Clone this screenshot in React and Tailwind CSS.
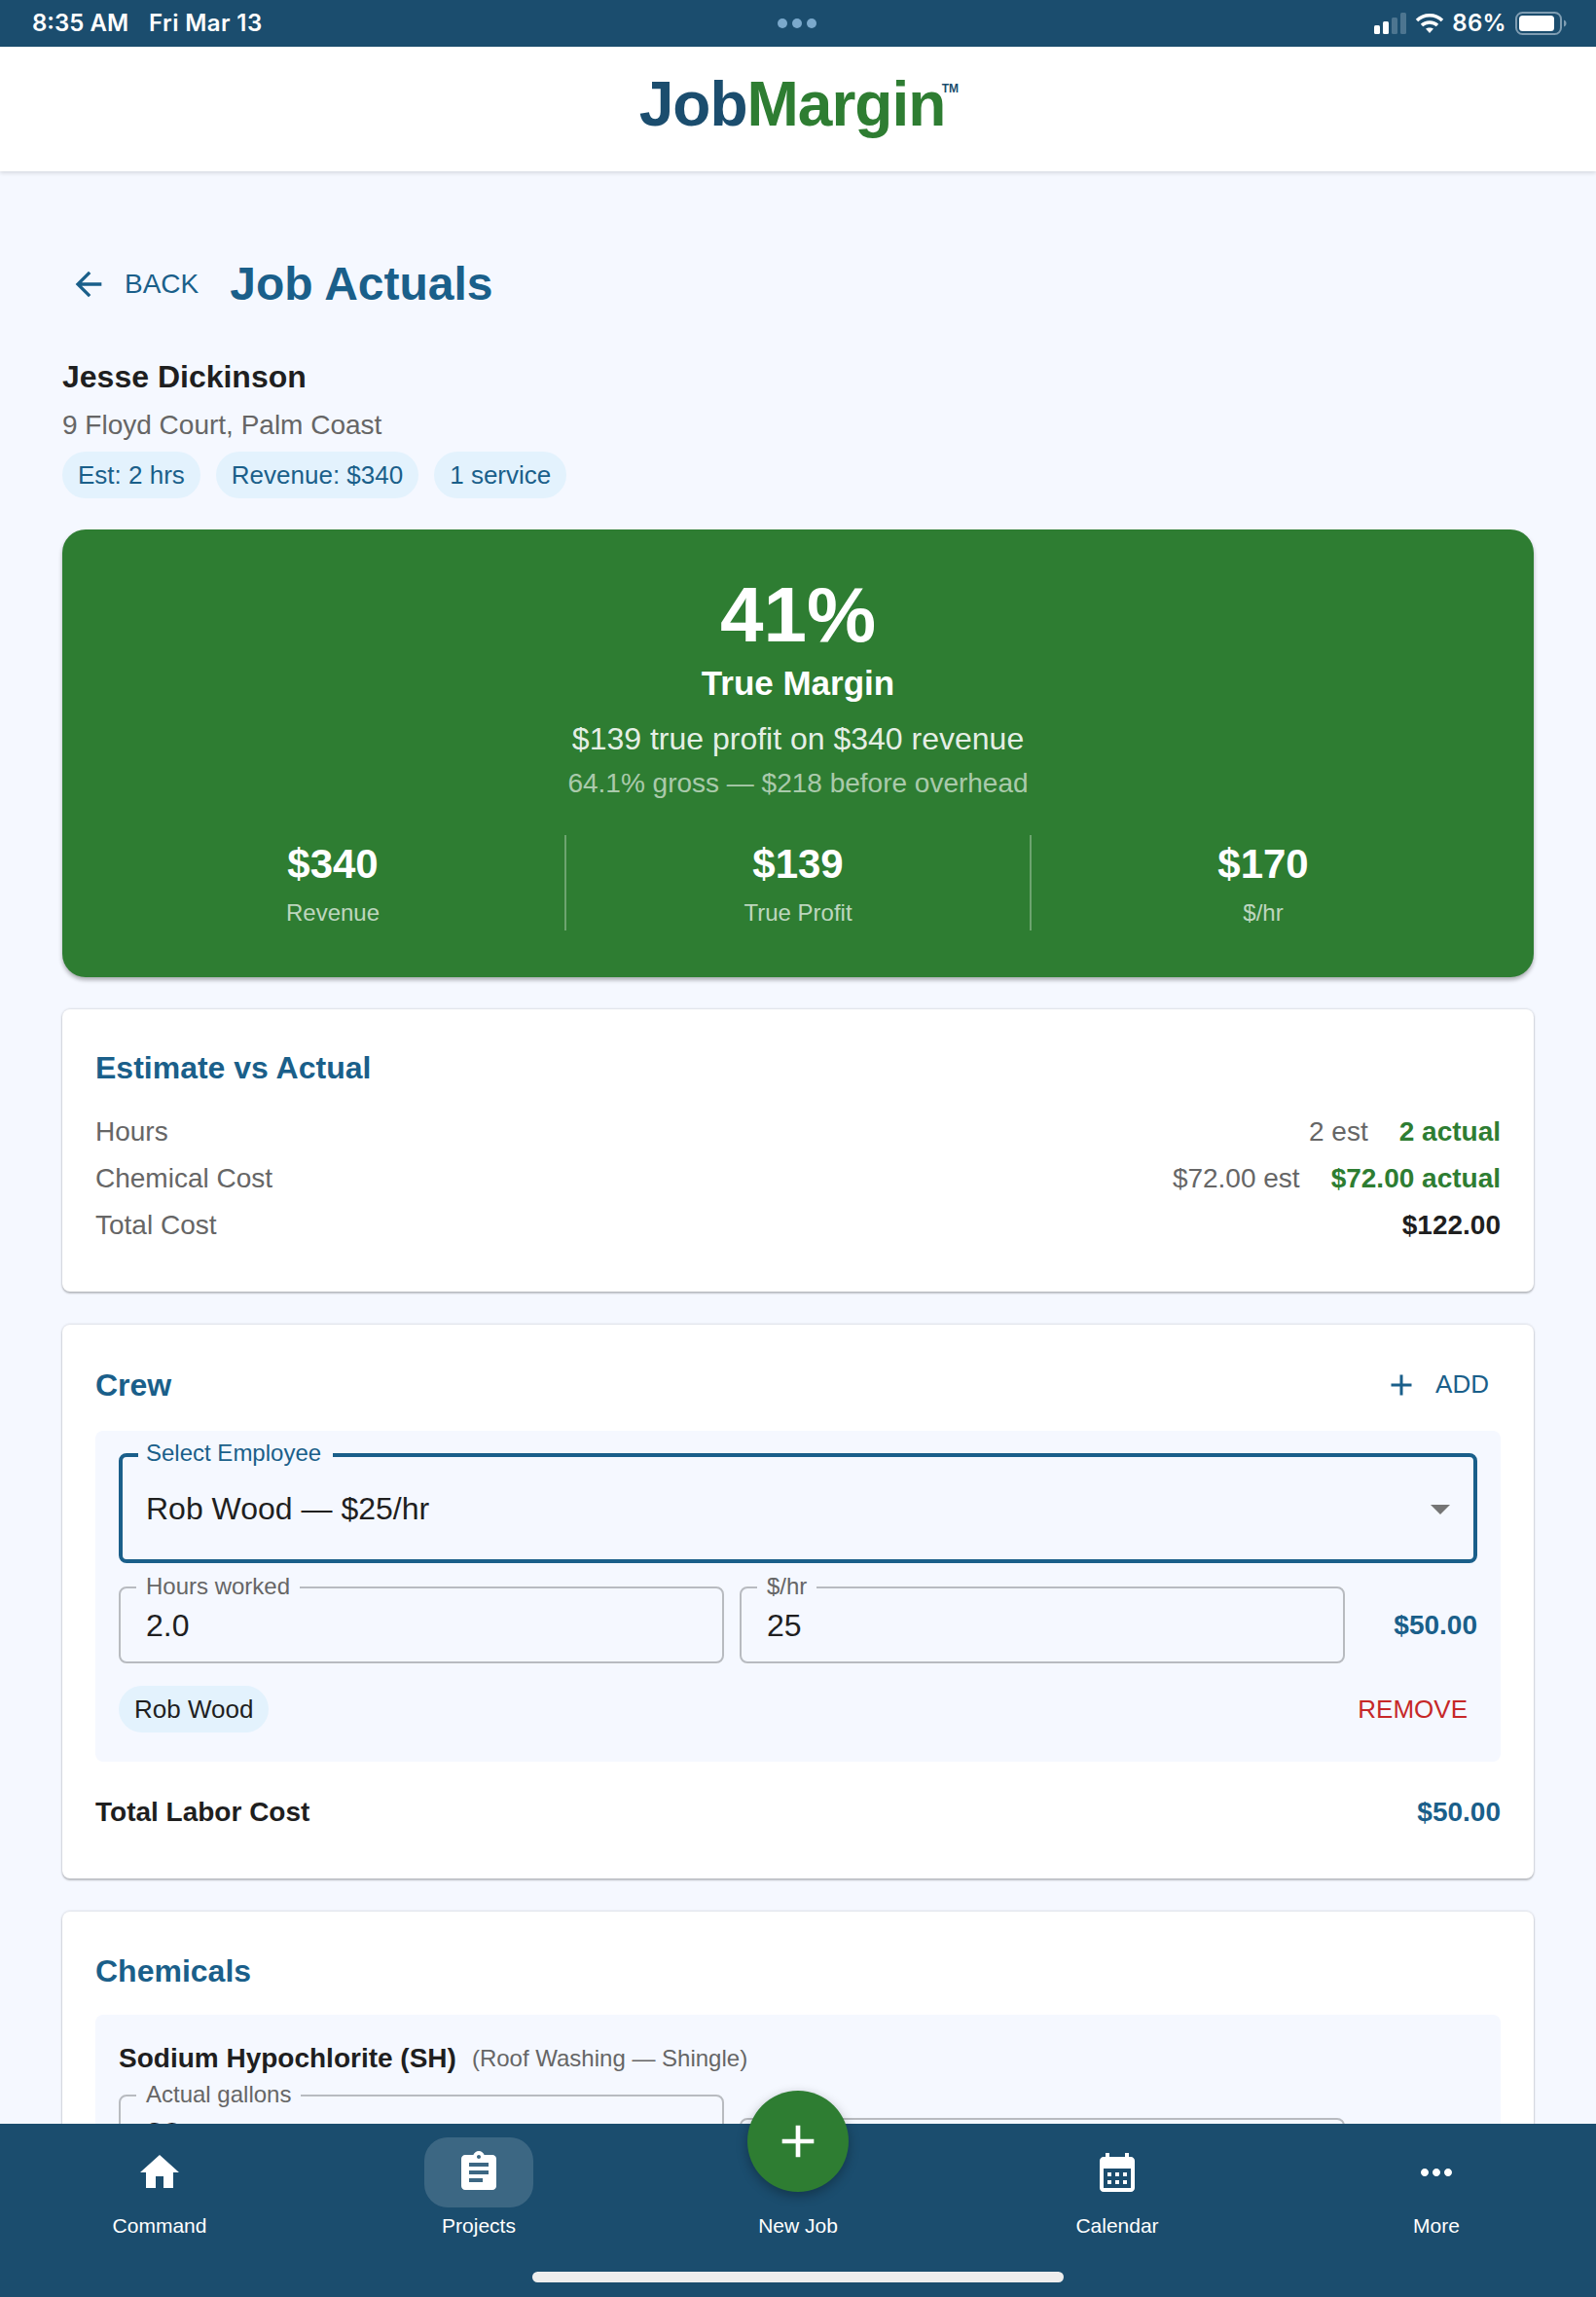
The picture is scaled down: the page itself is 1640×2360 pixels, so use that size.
import React from 'react';

const ICONS = {
  home: 'M10 20v-6h4v6h5v-8h3L12 3 2 12h3v8z',
  assignment: 'M19 3h-4.18C14.4 1.84 13.3 1 12 1c-1.3 0-2.4.84-2.82 2H5c-1.1 0-2 .9-2 2v14c0 1.1.9 2 2 2h14c1.1 0 2-.9 2-2V5c0-1.1-.9-2-2-2zm-7 0c.55 0 1 .45 1 1s-.45 1-1 1-1-.45-1-1 .45-1 1-1zm2 14H7v-2h7v2zm3-4H7v-2h10v2zm0-4H7V7h10v2z',
  calendar: 'M19 4h-1V2h-2v2H8V2H6v2H5c-1.11 0-1.99.9-1.99 2L3 20c0 1.1.89 2 2 2h14c1.1 0 2-.9 2-2V6c0-1.1-.9-2-2-2zm0 16H5V10h14v10zM9 14H7v-2h2v2zm4 0h-2v-2h2v2zm4 0h-2v-2h2v2zm-8 4H7v-2h2v2zm4 0h-2v-2h2v2zm4 0h-2v-2h2v2z',
  more: 'M6 10c-1.1 0-2 .9-2 2s.9 2 2 2 2-.9 2-2-.9-2-2-2zm12 0c-1.1 0-2 .9-2 2s.9 2 2 2 2-.9 2-2-.9-2-2-2zm-6 0c-1.1 0-2 .9-2 2s.9 2 2 2 2-.9 2-2-.9-2-2-2z',
  back: 'M20 11H7.83l5.59-5.59L12 4l-8 8 8 8 1.41-1.41L7.83 13H20v-2z',
  add: 'M19 13h-6v6h-2v-6H5v-2h6V5h2v6h6v2z',
  drop: 'M7 10l5 5 5-5z',
};

const Icon = ({ name, className }) => (
  <svg viewBox="0 0 24 24" className={className} fill="currentColor">
    <path d={ICONS[name]} />
  </svg>
);

const CARD = 'bg-white rounded-[8px] shadow-[0_2px_2px_0_rgba(0,0,0,0.2),0_0_2px_1px_rgba(0,0,0,0.1)]';

const StatusBar = () => (
  <div className="h-[48px] shrink-0 bg-[#1b4d6e] text-white flex items-center justify-between pl-[33px] pr-[29px] font-['Inter',sans-serif] font-semibold text-[24px] relative">
    <div className="flex gap-[21px]">
      <span>8:35 AM</span>
      <span className="tracking-[0.4px]">Fri Mar 13</span>
    </div>
    <div className="absolute left-[799px] top-[19px] flex gap-[5px]">
      <span className="w-[10px] h-[10px] rounded-full bg-[#7ba9cc]" />
      <span className="w-[10px] h-[10px] rounded-full bg-[#7ba9cc]" />
      <span className="w-[10px] h-[10px] rounded-full bg-[#7ba9cc]" />
    </div>
    <div className="flex items-center gap-[8px]">
      <svg width="34" height="22" viewBox="0 0 34 22">
        <rect x="0" y="13" width="6" height="9" rx="1.5" fill="#fff" />
        <rect x="9" y="9" width="6" height="13" rx="1.5" fill="#fff" />
        <rect x="18" y="5" width="6" height="17" rx="1.5" fill="#4d7590" />
        <rect x="27" y="0" width="6" height="22" rx="1.5" fill="#4d7590" />
      </svg>
      <svg width="30" height="22" viewBox="0 0 30 22" fill="none" stroke="#fff" strokeWidth="3.4">
        <path d="M2 8 C9 1 21 1 28 8" />
        <path d="M7 13 C11 9 19 9 23 13" />
        <path d="M15 21 L11 16.5 C13 15 17 15 19 16.5 Z" fill="#fff" stroke="none" />
      </svg>
      <span className="tracking-[0.3px]">86%</span>
      <svg width="54" height="24" viewBox="0 0 54 24" className="ml-[1px]">
        <rect x="1" y="1" width="46" height="22" rx="6.5" fill="none" stroke="#7f9db2" strokeWidth="2" />
        <rect x="4" y="4" width="36" height="16" rx="3.5" fill="#fff" />
        <path d="M50 8.5 C52 9.5 52.5 10.5 52.5 12 C52.5 13.5 52 14.5 50 15.5 Z" fill="#7f9db2" />
      </svg>
    </div>
  </div>
);

const Logo = () => (
  <div className="h-[128px] shrink-0 bg-[#fff] flex justify-center shadow-[0_2px_4px_rgba(0,0,0,0.12)] relative z-10">
    <div className="mt-[22px] mr-[12px] text-[64px] leading-[74px] font-bold tracking-[-1px] relative">
      <span className="text-[#1b4d6e]">Job</span>
      <span className="text-[#2e7d32]">Margin</span>
      <span className="absolute left-[311px] top-[11px] text-[12px] leading-[20px] tracking-normal text-[#1b4d6e]">TM</span>
    </div>
  </div>
);

const Chip = ({ children, dark }) => (
  <span className={`h-[48px] px-[16px] rounded-full bg-[#e3f2fd] flex items-center text-[26px] ${dark ? 'text-[#1f1f1f]' : 'text-[#1a5f8a]'}`}>
    {children}
  </span>
);

const Stat = ({ value, label, border }) => (
  <div className={`flex-1 h-[98px] pt-[7px] text-center ${border ? 'border-r-2 border-[rgba(255,255,255,0.3)]' : ''}`}>
    <div className="text-[42px] leading-[46px] font-bold text-white">{value}</div>
    <div className="mt-[11px] text-[24px] leading-[32px] text-[rgba(255,255,255,0.7)]">{label}</div>
  </div>
);

const Hero = () => (
  <div className="mt-[32px] h-[460px] rounded-[24px] bg-[#2e7d32] px-[40px] pt-[48px] text-center shadow-[0_3px_4px_rgba(0,0,0,0.3)]">
    <div className="text-[80px] leading-[80px] font-bold text-white">41%</div>
    <div className="mt-[8px] text-[35px] leading-[44px] font-bold text-white">True Margin</div>
    <div className="mt-[13px] text-[32px] leading-[44px] text-[rgba(255,255,255,0.9)]">$139 true profit on $340 revenue</div>
    <div className="mt-[4px] text-[28px] leading-[40px] text-[rgba(255,255,255,0.6)]">64.1% gross — $218 before overhead</div>
    <div className="mt-[33px] flex">
      <Stat value="$340" label="Revenue" border />
      <Stat value="$139" label="True Profit" border />
      <Stat value="$170" label="$/hr" />
    </div>
  </div>
);

const EstRow = ({ label, est, actual, strong }) => (
  <div className="flex justify-between h-[48px] items-center text-[28px]">
    <span className="text-[#666]">{label}</span>
    <span className="flex gap-[32px]">
      {est && <span className="text-[#666]">{est}</span>}
      {actual && <span className="font-bold text-[#2e7d32]">{actual}</span>}
      {strong && <span className="font-bold text-[#1f1f1f]">{strong}</span>}
    </span>
  </div>
);

const SectionTitle = ({ children }) => (
  <div className="text-[32px] leading-[44px] font-bold text-[#1a5f8a]">{children}</div>
);

const Field = ({ label, value, notch, className }) => (
  <div className={`relative h-[79px] border-2 border-[#b8bbc0] rounded-[8px] flex items-center pl-[26px] text-[32px] text-[#1f1f1f] ${className ?? ''}`}>
    {value}
    <span className={`absolute left-[16px] -top-[16px] px-[10px] bg-[#f5f8ff] text-[24px] leading-[28px] text-[#666] ${notch ?? ''}`}>{label}</span>
  </div>
);

const CrewCard = () => (
  <div className={`${CARD} mt-[34px] h-[569px] px-[34px] pt-[40px]`}>
    <div className="flex justify-between items-center">
      <SectionTitle>Crew</SectionTitle>
      <div className="flex items-center gap-[17px] pr-[12px] text-[26px] text-[#1a5f8a]">
        <Icon name="add" className="w-[36px] h-[36px]" />
        <span className="mt-[-1px]">ADD</span>
      </div>
    </div>
    <div className="mt-[25px] rounded-[8px] bg-[#f5f8ff] px-[24px] pt-[23px] pb-[30px]">
      <div className="relative h-[113px] border-4 border-[#1a5f8a] rounded-[8px] flex items-center justify-between pl-[24px] pr-[10px] text-[32px] text-[#1f1f1f]">
        Rob Wood — $25/hr
        <Icon name="drop" className="w-[48px] h-[48px] text-[#757575]" />
        <span className="absolute left-[16px] -top-[18px] pl-[8px] pr-[12px] bg-[#f5f8ff] text-[24px] leading-[28px] text-[#1a5f8a]">Select Employee</span>
      </div>
      <div className="mt-[24px] flex items-center gap-[16px]">
        <Field label="Hours worked" value="2.0" className="flex-1" />
        <Field label="$/hr" value="25" className="flex-1" />
        <div className="w-[120px] text-right text-[28px] font-bold text-[#1a5f8a] pt-[1px]">$50.00</div>
      </div>
      <div className="mt-[23px] flex items-center justify-between pr-[10px]">
        <Chip dark>Rob Wood</Chip>
        <span className="text-[26px] text-[#c62828]">REMOVE</span>
      </div>
    </div>
    <div className="mt-[32px] flex justify-between items-center h-[40px] text-[28px] font-bold">
      <span className="text-[#1f1f1f]">Total Labor Cost</span>
      <span className="text-[#1a5f8a]">$50.00</span>
    </div>
  </div>
);

const ChemicalsCard = () => (
  <div className={`${CARD} mt-[34px] h-[500px] px-[34px] pt-[39px]`}>
    <SectionTitle>Chemicals</SectionTitle>
    <div className="mt-[23px] rounded-[8px] bg-[#f5f8ff] px-[24px] pt-[25px] h-[400px]">
      <div className="flex items-center h-[40px] gap-[16px]">
        <span className="text-[28px] font-bold text-[#1f1f1f]">Sodium Hypochlorite (SH)</span>
        <span className="text-[24px] text-[#666]">(Roof Washing — Shingle)</span>
      </div>
      <div className="mt-[17px] flex items-start gap-[16px] pr-[136px]">
        <Field label="Actual gallons" value="32" className="flex-1" />
        <Field label="" value="" className="flex-1 mt-[24px]" notch="hidden" />
      </div>
    </div>
  </div>
);

const NavItem = ({ icon, label, active }) => (
  <div className="flex-1 flex flex-col items-center pt-[14px]">
    <div className={`w-[112px] h-[72px] rounded-[24px] flex items-center justify-center ${active ? 'bg-[rgba(255,255,255,0.15)]' : ''}`}>
      {icon && <Icon name={icon} className="w-[48px] h-[48px] text-white" />}
    </div>
    <div className="mt-[5px] text-[21px] leading-[28px] text-white">{label}</div>
  </div>
);

const BottomNav = () => (
  <div className="h-[178px] shrink-0 bg-[#1b4d6e] flex relative z-20">
    <NavItem icon="home" label="Command" />
    <NavItem icon="assignment" label="Projects" active />
    <NavItem label="New Job" />
    <NavItem icon="calendar" label="Calendar" />
    <NavItem icon="more" label="More" />
    {/* FAB sits over the top edge of the bar */}
    <div className="absolute left-[768px] -top-[34px] w-[104px] h-[104px] rounded-full bg-[#2e7d32] flex items-center justify-center shadow-[0_4px_12px_rgba(0,0,0,0.3)]">
      <Icon name="add" className="w-[56px] h-[56px] text-white" />
    </div>
    <div className="absolute left-[547px] top-[152px] w-[546px] h-[11px] rounded-full bg-[#eeeeee]" />
  </div>
);

export default function App() {
  return (
    <div className="h-[2360px] w-[1640px] flex flex-col overflow-hidden bg-[#f5f8ff] font-['Liberation_Sans',Arial,sans-serif]">
      <StatusBar />
      <Logo />
      <main className="flex-1 min-h-0 overflow-hidden px-[64px] pt-[84px]">
        <div className="flex items-center h-[64px]">
          <div className="flex items-center gap-[17px] pl-[7px] text-[28px] text-[#1a5f8a]">
            <Icon name="back" className="w-[40px] h-[40px]" />
            <span>BACK</span>
          </div>
          <h1 className="ml-[32px] text-[48px] font-bold text-[#1a5f8a]">Job Actuals</h1>
        </div>
        <div className="mt-[43px] text-[32px] leading-[40px] font-bold text-[#1f1f1f]">Jesse Dickinson</div>
        <div className="mt-[10px] text-[28px] leading-[40px] text-[#666]">9 Floyd Court, Palm Coast</div>
        <div className="mt-[7px] flex gap-[16px]">
          <Chip>Est: 2 hrs</Chip>
          <Chip>Revenue: $340</Chip>
          <Chip>1 service</Chip>
        </div>
        <Hero />
        <div className={`${CARD} mt-[33px] h-[290px] px-[34px] pt-[38px]`}>
          <SectionTitle>Estimate vs Actual</SectionTitle>
          <div className="mt-[20px]">
            <EstRow label="Hours" est="2 est" actual="2 actual" />
            <EstRow label="Chemical Cost" est="$72.00 est" actual="$72.00 actual" />
            <EstRow label="Total Cost" strong="$122.00" />
          </div>
        </div>
        <CrewCard />
        <ChemicalsCard />
      </main>
      <BottomNav />
    </div>
  );
}
